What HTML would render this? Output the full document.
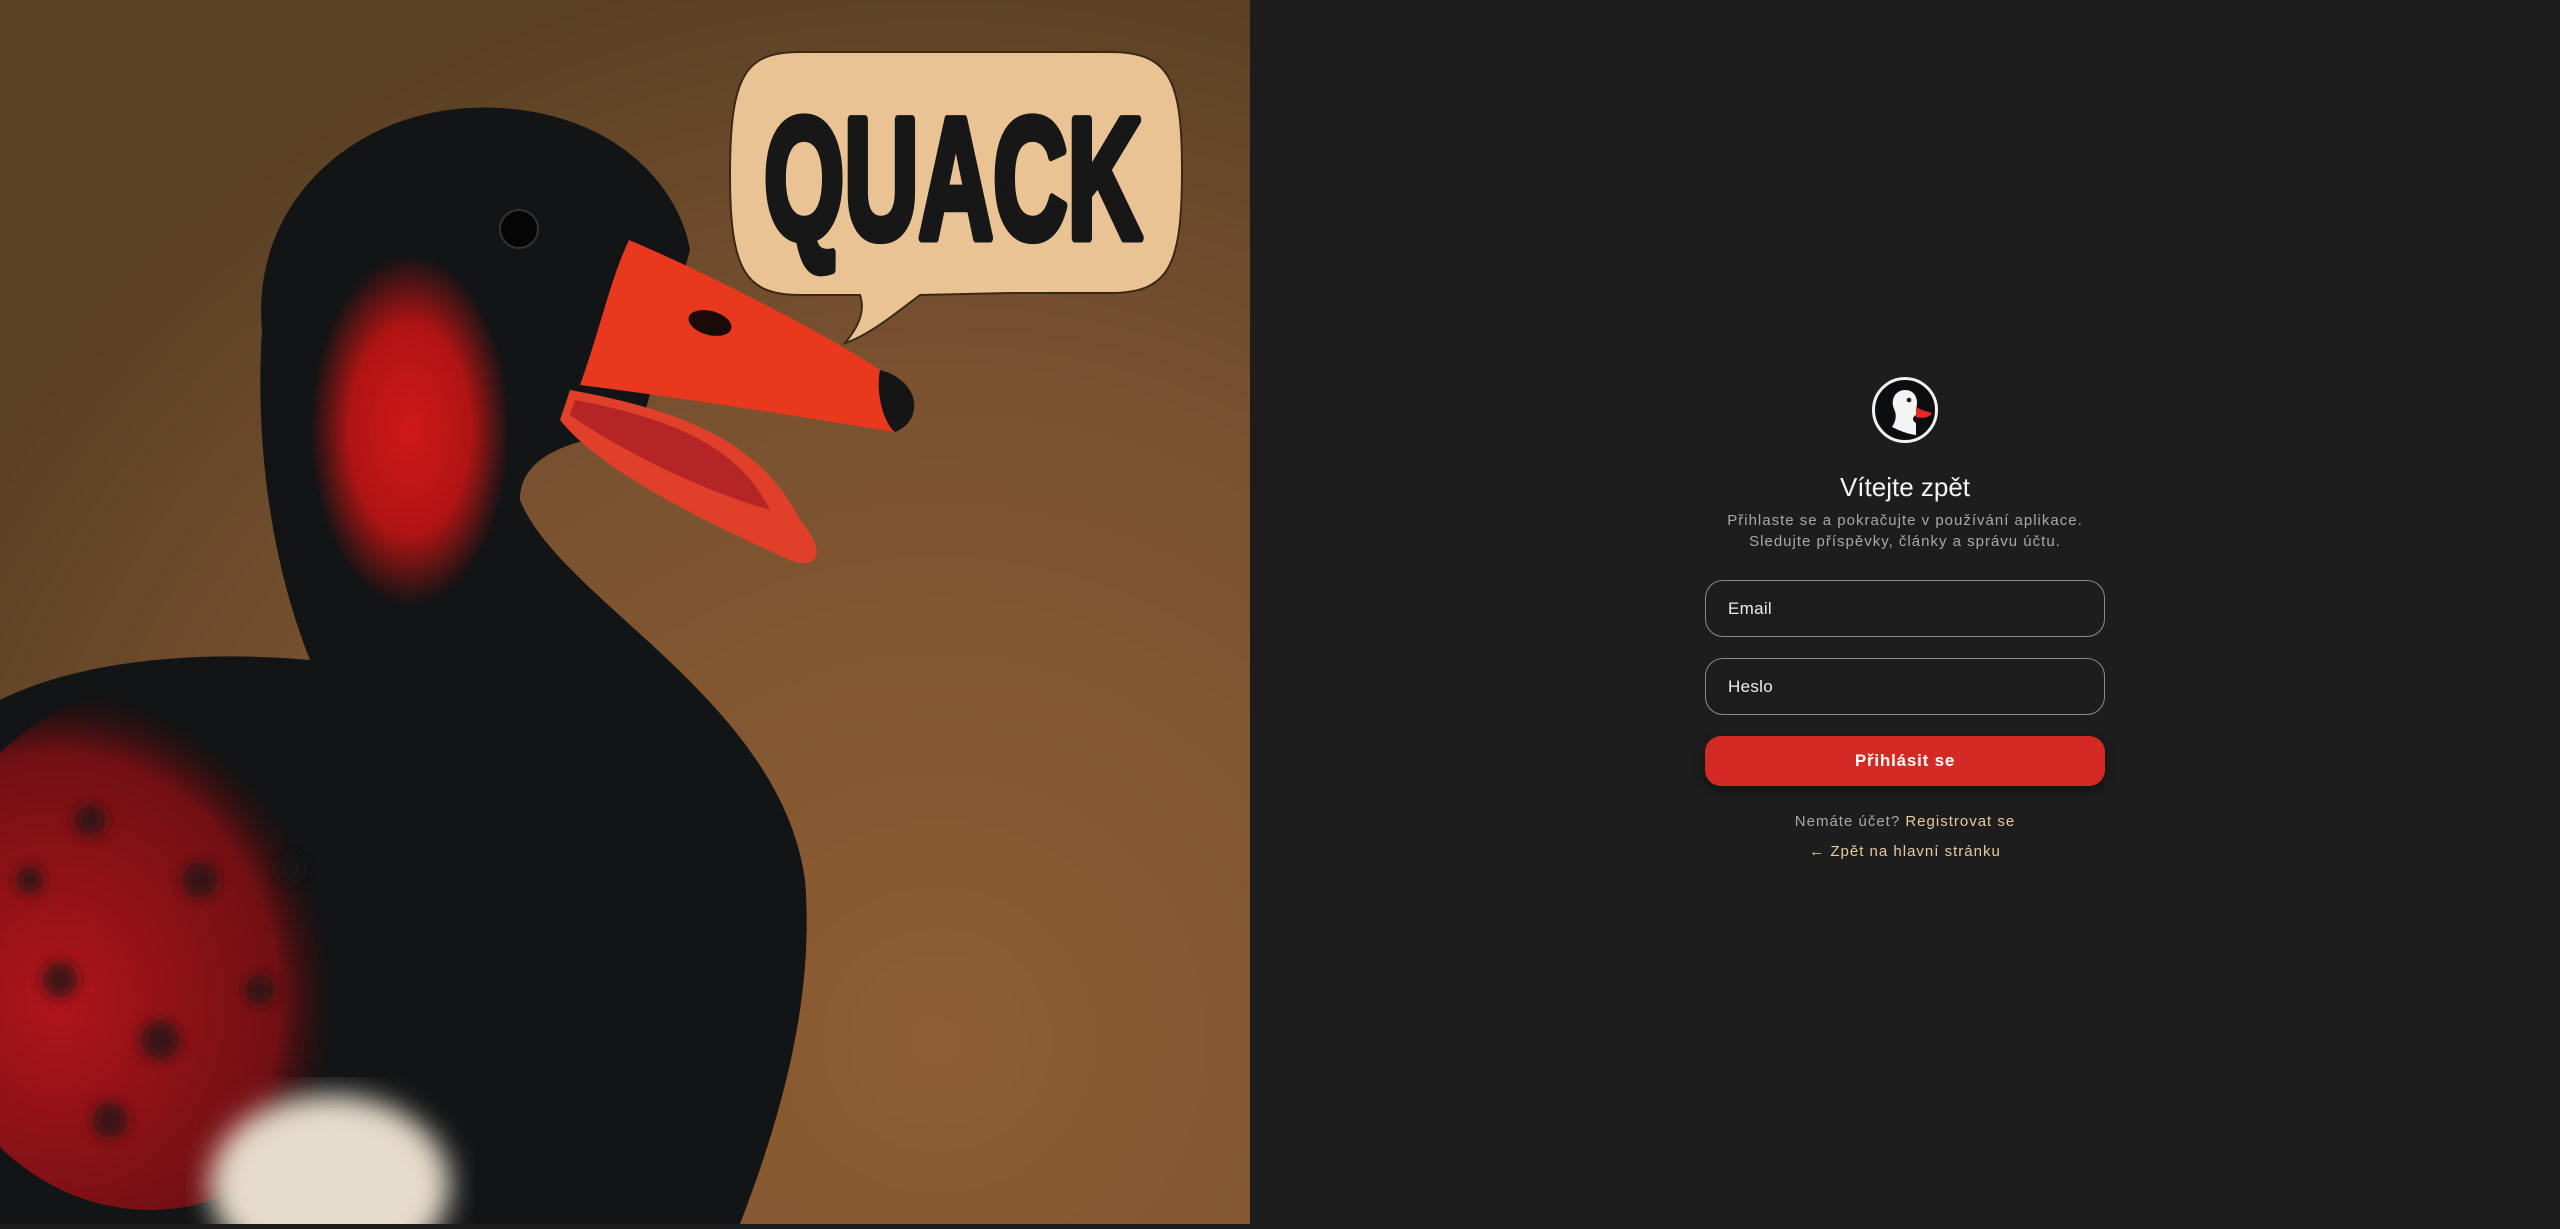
<!DOCTYPE html>
<html><head><meta charset="utf-8"><style>
html,body{margin:0;padding:0;width:2560px;height:1224px;overflow:hidden;background:#1d1d1d;font-family:"Liberation Sans",sans-serif}
#left{position:absolute;left:0;top:0;width:1250px;height:1224px}
#right{position:absolute;left:1250px;top:0;width:1310px;height:1224px;background:#1d1d1d}
.c{position:absolute;left:1605px;width:600px;text-align:center}
.in{position:absolute;left:1705px;width:398px;height:55px;border:1.5px solid #8a8a8a;border-radius:18px;box-sizing:content-box}
.in span{position:absolute;left:22px;top:18px;color:#ececec;font-size:17px;letter-spacing:.3px}
</style></head><body>
<div id="left"><svg width="1250" height="1224" viewBox="0 0 1250 1224">
<defs>
<radialGradient id="bg" cx="0.75" cy="0.85" r="0.9"><stop offset="0" stop-color="#8e5d33"/><stop offset="0.6" stop-color="#7a5230"/><stop offset="1" stop-color="#5a4024"/></radialGradient>
<radialGradient id="red" cx="0.5" cy="0.5" r="0.5"><stop offset="0" stop-color="#d01818"/><stop offset="0.6" stop-color="#b01414"/><stop offset="1" stop-color="#b01414" stop-opacity="0"/></radialGradient>
<radialGradient id="bred" cx="0.3" cy="0.6" r="0.6"><stop offset="0" stop-color="#b0141a"/><stop offset="0.8" stop-color="#701014"/><stop offset="1" stop-color="#3a0a0a" stop-opacity="0"/></radialGradient>
<filter id="bl"><feGaussianBlur stdDeviation="14"/></filter>
<filter id="bl2"><feGaussianBlur stdDeviation="6"/></filter>
</defs>
<rect width="1250" height="1224" fill="url(#bg)"/>
<path d="M262 330 C250 200 360 100 500 108 C620 115 680 190 690 250 L640 430 C560 440 520 460 520 500 C560 600 780 700 805 880 C815 1000 780 1120 740 1224 L0 1224 L0 700 C80 660 200 650 310 660 C270 560 255 440 262 330 Z" fill="#121415"/>
<ellipse cx="150" cy="950" rx="230" ry="260" fill="url(#bred)"/>
<g fill="#151515" opacity="0.7" filter="url(#bl2)"><circle cx="90" cy="820" r="16"/><circle cx="200" cy="880" r="18"/><circle cx="60" cy="980" r="18"/><circle cx="160" cy="1040" r="20"/><circle cx="260" cy="990" r="15"/><circle cx="110" cy="1120" r="18"/><circle cx="30" cy="880" r="14"/><circle cx="290" cy="870" r="14"/></g>
<ellipse cx="330" cy="1185" rx="120" ry="90" fill="#e6dccb" filter="url(#bl)"/>
<ellipse cx="410" cy="430" rx="100" ry="175" fill="url(#red)"/>
<circle cx="519" cy="229" r="19" fill="#050505" stroke="#333" stroke-width="2"/>
<path d="M570 390 C680 410 760 440 800 520 C830 555 815 570 790 560 C700 520 600 470 560 420 Z" fill="#e0402a"/>
<path d="M575 400 C680 420 740 450 770 510 C700 490 620 450 570 415 Z" fill="#b52525"/>
<path d="M629 240 C700 270 820 330 880 370 C920 380 925 420 895 432 C820 420 700 400 580 385 C600 330 610 280 629 240 Z" fill="#e8391e"/>
<path d="M880 370 C920 380 925 420 895 432 C885 425 875 395 880 370 Z" fill="#151515"/>
<ellipse cx="710" cy="323" rx="22" ry="12" fill="#1a0a08" transform="rotate(15 710 323)"/>
<path d="M800 52 L1110 52 C1170 52 1182 80 1182 170 C1182 265 1170 293 1110 293 L1010 293 L920 295 C900 310 870 335 845 343 C860 325 865 310 860 295 L800 295 C745 295 730 270 730 175 C730 75 745 52 800 52 Z" fill="#e9c394" stroke="#3a2818" stroke-width="2"/>
<text x="764" y="238" textLength="378" lengthAdjust="spacingAndGlyphs" font-family="Liberation Sans" font-weight="bold" font-size="172" fill="#171717" stroke="#171717" stroke-width="9" stroke-linejoin="round">QUACK</text>
</svg></div>
<div id="right"></div>
<svg style="position:absolute;left:1872px;top:377px" width="66" height="66" viewBox="0 0 66 66">
<circle cx="33" cy="33" r="31.5" fill="#0c0d0f" stroke="#f2f2f2" stroke-width="3"/>
<path d="M22 32 C18 22 24 13 33 13 C41 13 45 19 45 26 L44 38 C40 40 40 44 44 46 L44 58 C36 57 28 54 20 50 C24 44 25 38 22 32 Z" fill="#f4f4f4"/>
<circle cx="37" cy="23" r="2.3" fill="#0c0d0f"/>
<path d="M44 30 L50 33 L60 36 C58 40 52 42 44 40 Z" fill="#e42a22"/>
</svg>
<div class="c" style="top:472px;color:#f4f4f4;font-size:26px">Vítejte zpět</div>
<div class="c" style="top:510px;color:#a8a8a8;font-size:15px;letter-spacing:1px;line-height:21px">Přihlaste se a pokračujte v používání aplikace.<br>Sledujte příspěvky, články a správu účtu.</div>
<div class="in" style="top:580px"><span>Email</span></div>
<div class="in" style="top:658px"><span>Heslo</span></div>
<div style="position:absolute;left:1705px;top:736px;width:400px;height:50px;border-radius:16px;background:#d32b24;color:#fff;font-weight:bold;font-size:17px;text-align:center;line-height:50px;letter-spacing:.8px;box-shadow:0 4px 10px rgba(0,0,0,.4)">Přihlásit se</div>
<div class="c" style="top:813px;color:#a8a8a8;font-size:15px;letter-spacing:1px">Nemáte účet? <span style="color:#e8c9a0">Registrovat se</span></div>
<div class="c" style="top:843px;color:#e8c9a0;font-size:15px;letter-spacing:1px">← Zpět na hlavní stránku</div>
</body></html>
